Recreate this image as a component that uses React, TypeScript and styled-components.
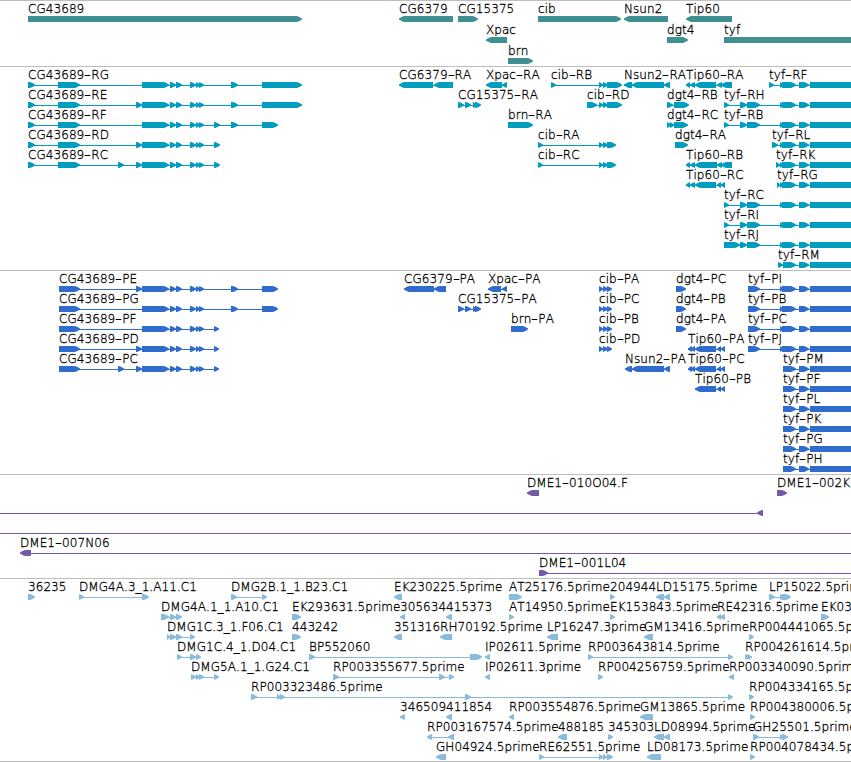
import { Fragment } from "react";
import styled, { createGlobalStyle } from "styled-components";

type Strand = "fwd" | "rev";
type Block = [number, number];

type TFeature = {
  name: string;
  blocks: Block[];
  strand: Strand;
  from?: number;
  to?: number;
};

type TTrack = {
  color: string;
  laneHeight: number;
  bottomGap: number;
  lanes: TFeature[][];
};

const VIEW_END = 860;
const BAR_HEIGHT = 6;
const TIP = 5;

const fwd = (name: string, ...blocks: Block[]): TFeature => ({
  name,
  blocks,
  strand: "fwd",
});

const rev = (name: string, ...blocks: Block[]): TFeature => ({
  name,
  blocks,
  strand: "rev",
});

// exons shared between several isoforms
const cgMid: Block[] = [
  [142, 169],
  [170, 176],
  [176, 182],
  [190, 196],
  [196, 200],
  [199, 204],
];
const cgStart: Block[] = [
  [28, 35],
  [58, 80],
];
const cgFifth: Block = [118, 124];
const cgSixth: Block = [136, 142];
const cgLate: Block = [231, 238];
const tyfTail: Block[] = [
  [799, 809],
  [810, VIEW_END],
];
const tyfEnd: Block[] = [[780, 783], [782, 796], ...tyfTail];
const tyfStart: Block[] = [
  [724, 729],
  [740, 747],
  [747, 760],
];
const tyfShort: Block[] = [[783, 796], ...tyfTail];
const cibEnd: Block[] = [
  [599, 603],
  [603, 608],
];
const cg15375: Block[] = [
  [458, 464],
  [465, 471],
  [473, 477],
  [475, 481],
];
const tipEnd: Block[] = [
  [695, 716],
  [717, 721],
  [721, 725],
];
const tipProtein: Block[] = [[688, 692], [691, 695], ...tipEnd];

const tracks: TTrack[] = [
  {
    color: "#408f92",
    laneHeight: 21,
    bottomGap: 2,
    lanes: [
      [
        fwd("CG43689", [28, 302]),
        rev("CG6379", [399, 453]),
        fwd("CG15375", [458, 478]),
        fwd("cib", [538, 621]),
        rev("Nsun2", [624, 668]),
        rev("Tip60", [686, 732]),
      ],
      [
        rev("Xpac", [486, 507]),
        fwd("dgt4", [667, 688]),
        fwd("tyf", [724, VIEW_END]),
      ],
      [fwd("brn", [508, 533])],
    ],
  },
  {
    color: "#009dbf",
    laneHeight: 20,
    bottomGap: 3,
    lanes: [
      [
        fwd("CG43689-RG", ...cgStart, ...cgMid, cgLate, [262, 302]),
        rev("CG6379-RA", [399, 433], [434, 453]),
        rev("Xpac-RA", [486, 502], [502, 507]),
        fwd("cib-RB", [551, 556], ...cibEnd, [607, 622]),
        rev("Nsun2-RA", [624, 632], [632, 664], [664, 670]),
        rev("Tip60-RA", [686, 690], [690, 695], [695, 716], [717, 722], [721, 732]),
        fwd("tyf-RF", [769, 774], ...tyfEnd),
      ],
      [
        fwd("CG43689-RE", ...cgStart, cgSixth, ...cgMid, cgLate, [262, 302]),
        fwd("CG15375-RA", ...cg15375),
        fwd("cib-RD", [587, 597], ...cibEnd, [607, 622]),
        fwd("dgt4-RB", [667, 673], [674, 689]),
        fwd("tyf-RH", ...tyfStart, ...tyfEnd),
      ],
      [
        fwd("CG43689-RF", ...cgStart, ...cgMid, [214, 220], cgLate, [262, 278]),
        fwd("brn-RA", [508, 533]),
        fwd("dgt4-RC", [667, 671], [670, 674], [674, 688]),
        fwd("tyf-RB", ...tyfStart, ...tyfEnd),
      ],
      [
        fwd("CG43689-RD", ...cgStart, cgSixth, ...cgMid, [214, 220]),
        fwd("cib-RA", [538, 543], ...cibEnd, [607, 616]),
        fwd("dgt4-RA", [675, 688]),
        fwd("tyf-RL", [772, 778], ...tyfEnd),
      ],
      [
        fwd("CG43689-RC", ...cgStart, cgFifth, cgSixth, ...cgMid, [214, 220]),
        fwd("cib-RC", [538, 543], ...cibEnd, [607, 616]),
        rev("Tip60-RB", [686, 690], [690, 695], [695, 717], [717, 722], [721, 732]),
        fwd("tyf-RK", [776, 780], ...tyfEnd),
      ],
      [
        rev("Tip60-RC", [686, 690], [690, 695], ...tipEnd),
        fwd("tyf-RG", [777, 780], ...tyfEnd),
      ],
      [fwd("tyf-RC", ...tyfStart, ...tyfEnd)],
      [fwd("tyf-RI", ...tyfStart, ...tyfEnd)],
      [fwd("tyf-RJ", [724, 740], [740, 747], [747, 760], ...tyfEnd)],
      [fwd("tyf-RM", [778, 783], ...tyfShort)],
    ],
  },
  {
    color: "#306ccd",
    laneHeight: 20,
    bottomGap: 3,
    lanes: [
      [
        fwd("CG43689-PE", [59, 80], cgSixth, ...cgMid, cgLate, [262, 278]),
        rev("CG6379-PA", [404, 434], [434, 446]),
        rev("Xpac-PA", [488, 501], [502, 507]),
        fwd("cib-PA", ...cibEnd, [607, 612]),
        fwd("dgt4-PC", [676, 686]),
        fwd("tyf-PI", [748, 760], ...tyfEnd),
      ],
      [
        fwd("CG43689-PG", [59, 80], ...cgMid, cgLate, [262, 278]),
        fwd("CG15375-PA", ...cg15375),
        fwd("cib-PC", ...cibEnd, [607, 612]),
        fwd("dgt4-PB", [676, 686]),
        fwd("tyf-PB", [748, 760], ...tyfEnd),
      ],
      [
        fwd("CG43689-PF", [59, 80], ...cgMid, [214, 219]),
        fwd("brn-PA", [511, 528]),
        fwd("cib-PB", ...cibEnd, [607, 612]),
        fwd("dgt4-PA", [676, 686]),
        fwd("tyf-PC", [748, 760], ...tyfEnd),
      ],
      [
        fwd("CG43689-PD", [59, 80], cgSixth, ...cgMid, [214, 219]),
        fwd("cib-PD", ...cibEnd, [607, 612]),
        rev("Tip60-PA", ...tipProtein),
        fwd("tyf-PJ", [748, 760], ...tyfEnd),
      ],
      [
        fwd("CG43689-PC", [59, 80], cgFifth, cgSixth, ...cgMid, [214, 219]),
        rev("Nsun2-PA", [625, 632], [632, 664], [664, 670]),
        rev("Tip60-PC", ...tipProtein),
        fwd("tyf-PM", ...tyfShort),
      ],
      [rev("Tip60-PB", ...tipEnd), fwd("tyf-PF", ...tyfShort)],
      [fwd("tyf-PL", ...tyfShort)],
      [fwd("tyf-PK", ...tyfShort)],
      [fwd("tyf-PG", ...tyfShort)],
      [fwd("tyf-PH", ...tyfShort)],
    ],
  },
  {
    color: "#7559a7",
    laneHeight: 20,
    bottomGap: 3,
    lanes: [
      [rev("DME1-010O04.F", [527, 539]), fwd("DME1-002K", [777, 787])],
      [{ ...rev("", [757, 763]), from: 0 }],
      [{ ...rev(""), from: 0, to: VIEW_END }],
      [{ ...rev("DME1-007N06", [20, 31]), to: VIEW_END }],
      [{ ...fwd("DME1-001L04", [539, 548]), to: VIEW_END }],
    ],
  },
  {
    color: "#88bbdc",
    laneHeight: 20,
    bottomGap: 2,
    lanes: [
      [
        fwd("36235", [28, 35]),
        fwd("DMG4A.3_1.A11.C1", [79, 84], [142, 149]),
        fwd("DMG2B.1_1.B23.C1", [231, 237], [262, 267]),
        rev("EK230225.5prime", [394, 402]),
        fwd("AT25176.5prime", [509, 522]),
        fwd("204944", [610, 615]),
        rev("LD15175.5prime", [656, 664], [664, 670]),
        fwd("LP15022.5prime", [769, 775], [780, 784], [782, 791]),
      ],
      [
        fwd("DMG4A.1_1.A10.C1", [161, 169], [170, 176], [176, 182]),
        fwd("EK293631.5prime", [292, 301]),
        rev("305634", [400, 405]),
        rev("415373", [446, 452]),
        fwd("AT14950.5prime", [509, 514]),
        fwd("EK153843.5prime", [610, 615]),
        rev("RE42316.5prime", [717, 721], [720, 725]),
        fwd("EK03", [821, 829]),
      ],
      [
        fwd("DMG1C.3_1.F06.C1", [167, 170], [170, 176], [176, 182], [190, 195]),
        fwd("443242", [292, 301]),
        rev("351316", [394, 402]),
        rev("RH70192.5prime", [440, 452]),
        rev("LP16247.3prime", [547, 558]),
        rev("GM13416.5prime", [644, 653]),
        fwd("RP004441065.5prime", [749, 754]),
      ],
      [
        fwd("DMG1C.4_1.D04.C1", [177, 182], [190, 196], [196, 201]),
        fwd("BP552060", [309, 315], [470, 482]),
        rev("IP02611.5prime", [485, 490]),
        fwd("RP003643814.5prime", [588, 593], [728, 733]),
        fwd("RP004261614.5prime", [745, 748], [747, 752]),
      ],
      [
        fwd("DMG5A.1_1.G24.C1", [191, 196], [196, 200], [199, 204], [214, 219]),
        fwd("RP003355677.5prime", [333, 339], [439, 445], [449, 454]),
        rev("IP02611.3prime", [485, 490]),
        fwd("RP004256759.5prime", [598, 603]),
        rev("RP003340090.5prime", [729, 734]),
      ],
      [
        fwd("RP003323486.5prime", [251, 257], [277, 281], [280, 285], [465, 471], [728, 733]),
        fwd("RP004334165.5prime", [749, 754]),
      ],
      [
        rev("346509", [400, 405]),
        rev("411854", [446, 452]),
        rev("RP003554876.5prime", [509, 514]),
        rev("GM13865.5prime", [640, 653]),
        fwd("RP004380006.5prime", [750, 755]),
      ],
      [
        rev("RP003167574.5prime", [427, 432], [448, 454]),
        rev("488185", [558, 567]),
        fwd("345303", [608, 613]),
        rev("LD08994.5prime", [654, 664], [664, 670]),
        fwd("GH25501.5prime", [753, 759], [780, 783], [782, 788]),
      ],
      [
        rev("GH04924.5prime", [436, 446]),
        fwd("RE62551.5prime", [539, 544], [599, 603], [603, 607], [607, 613]),
        rev("LD08173.5prime", [647, 661]),
        fwd("RP004078434.5prime", [750, 755]),
      ],
    ],
  },
];

function blockPoints([start, end]: Block, strand: Strand, origin: number) {
  const tail = (strand === "fwd" ? start : end) - origin;
  const head = (strand === "fwd" ? end : start) - origin;
  const dir = strand === "fwd" ? 1 : -1;
  const tip = Math.min(TIP, end - start) * dir;
  const shoulder = tip * 0.5;

  return [
    [tail, 0],
    [head - tip, 0],
    [head - shoulder, 1],
    [head, 2.4],
    [head, 3.6],
    [head - shoulder, 5],
    [head - tip, BAR_HEIGHT],
    [tail, BAR_HEIGHT],
  ]
    .map((point) => point.join(","))
    .join(" ");
}

function FeatureLabel({ name }: { name: string }) {
  const parts = name.split("-");

  return (
    <Label>
      {parts.map((part, index) => (
        <Fragment key={index}>
          {index > 0 && <Dash>-</Dash>}
          {part}
        </Fragment>
      ))}
    </Label>
  );
}

function Feature({ feature }: { feature: TFeature }) {
  const { name, blocks, strand } = feature;
  const start = feature.from ?? blocks[0][0];
  const end = feature.to ?? blocks[blocks.length - 1][1];
  const width = end - start;

  return (
    <FeatureContainer style={{ left: start }}>
      <FeatureLabel name={name} />
      <Glyph width={width} height={BAR_HEIGHT}>
        <rect x={0} y={3} width={width - 1} height={1} />
        {blocks.map((block, index) => (
          <polygon key={index} points={blockPoints(block, strand, start)} />
        ))}
      </Glyph>
    </FeatureContainer>
  );
}

export default function App() {
  return (
    <>
      <GlobalStyle />
      <Browser>
        {tracks.map((track, index) => (
          <Track key={index} color={track.color} $bottomGap={track.bottomGap}>
            {track.lanes.map((lane, laneIndex) => (
              <Lane key={laneIndex} $height={track.laneHeight}>
                {lane.map((feature, featureIndex) => (
                  <Feature key={featureIndex} feature={feature} />
                ))}
              </Lane>
            ))}
          </Track>
        ))}
      </Browser>
    </>
  );
}

const GlobalStyle = createGlobalStyle`
  body {
    margin: 0;
    background: white;
    overflow: hidden;
  }
`;

const Browser = styled.main`
  width: 851px;
  height: 762px;
  box-sizing: border-box;
  overflow: hidden;
  border-bottom: 1px solid #bebebe;
  font-family: "DejaVu Sans Light", "DejaVu Sans", sans-serif;
  font-size: 12px;
  font-weight: 200;
  font-kerning: none;
  letter-spacing: 0.06px;
  color: black;
  -webkit-text-stroke: 0.3px black;
`;

const Track = styled.section<{ color: string; $bottomGap: number }>`
  border-top: 1px solid #bebebe;
  padding-bottom: ${(props) => props.$bottomGap}px;
  fill: ${(props) => props.color};
`;

const Lane = styled.div<{ $height: number }>`
  position: relative;
  height: ${(props) => props.$height}px;
`;

/* features sit at their sequence coordinate on the lane */
const FeatureContainer = styled.div`
  position: absolute;
  top: 1px;
  display: flex;
  flex-direction: column;
`;

const Label = styled.span`
  height: 14px;
  line-height: 14px;
  width: 0;
  white-space: nowrap;
`;

const Dash = styled.span`
  display: inline-block;
  width: 7px;
  text-align: center;
  transform: scaleX(1.6);
`;

const Glyph = styled.svg`
  display: block;
  flex: none;
`;
